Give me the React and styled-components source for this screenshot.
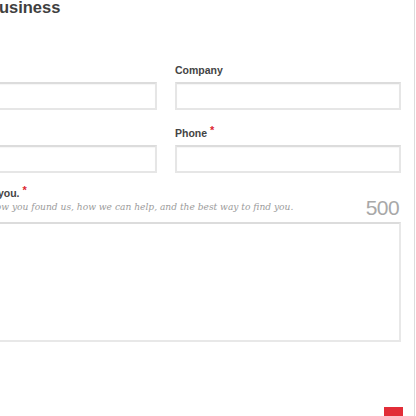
import React from "react";
import styled, { createGlobalStyle } from "styled-components";

const Global = createGlobalStyle`
  html, body { margin: 0; padding: 0; background: #fff; }
  body { font-family: "Liberation Sans", Arial, Helvetica, sans-serif; }
  * { box-sizing: border-box; }
`;

const Page = styled.div`
  width: 414px;
  height: 416px;
  border-right: 1px solid #dcdcdc;
  overflow: hidden;
  box-sizing: content-box;
`;

const Form = styled.form`
  width: 470px;
  margin-left: -69px;
  display: flex;
  flex-direction: column;
`;

const Heading = styled.h2`
  margin: 0 0 48px 56px;
  font-size: 16.5px;
  line-height: 15px;
  font-weight: 700;
  color: #3f3f3f;
`;

const Grid = styled.div`
  display: grid;
  grid-template-columns: 226px 226px;
  column-gap: 18px;
  row-gap: 16px;
`;

const Field = styled.div`
  display: flex;
  flex-direction: column;
`;

const Label = styled.label`
  font-size: 10.5px;
  line-height: ${(p) => (p.$tight ? "12px" : "14px")};
  margin-bottom: ${(p) => (p.$tight ? "0" : "5px")};
  font-weight: 700;
  color: #444;
`;

const Req = styled.span`
  color: #dd2630;
  font-size: 11px;
  margin-left: 3px;
  vertical-align: 3px;
  line-height: 0;
`;

const Input = styled.input`
  height: 28px;
  width: 100%;
  border: 2px solid #e6e6e6;
  border-top-color: #dcdcdc;
  background: #fff;
  box-shadow: inset 0 1px 1px rgba(0, 0, 0, 0.04);
  outline: none;
`;

const Message = styled.div`
  margin-top: 14px;
  display: flex;
  flex-direction: column;
`;

const MessageHeader = styled.div`
  display: flex;
  justify-content: space-between;
  align-items: flex-end;
`;

const MessageText = styled.div`
  display: flex;
  flex-direction: column;
  padding-bottom: 6px;
`;

const Hint = styled.span`
  margin-top: 4px;
  font-family: "DejaVu Serif", "Liberation Serif", serif;
  font-style: italic;
  font-size: 9.1px;
  line-height: 9px;
  color: #9b9b9b;
  white-space: nowrap;
`;

const Count = styled.span`
  font-size: 21px;
  line-height: 21px;
  letter-spacing: -0.6px;
  color: #a8a8a8;
  margin-right: 2px;
`;

const TextArea = styled.textarea`
  margin-top: 4px;
  height: 120px;
  width: 100%;
  resize: none;
  border: 2px solid #e8e8e8;
  border-top-color: #dcdcdc;
  background: #fff;
  outline: none;
`;

const ButtonRow = styled.div`
  margin-top: 65px;
  margin-right: -2px;
  display: flex;
  justify-content: flex-end;
`;

const Submit = styled.button`
  width: 19px;
  height: 30px;
  border: none;
  padding: 0;
  background: #e22d38;
`;

export default function App() {
  return (
    <>
      <Global />
      <Page>
        <Form onSubmit={(e) => e.preventDefault()}>
          <Heading>Business</Heading>
          <Grid>
            <Field>
              <Label>Name<Req>*</Req></Label>
              <Input type="text" />
            </Field>
            <Field>
              <Label>Company</Label>
              <Input type="text" />
            </Field>
            <Field>
              <Label>Email<Req>*</Req></Label>
              <Input type="email" />
            </Field>
            <Field>
              <Label>Phone<Req>*</Req></Label>
              <Input type="tel" />
            </Field>
          </Grid>
          <Message>
            <MessageHeader>
              <MessageText>
                <Label $tight>Tell us about you.<Req>*</Req></Label>
                <Hint>Let us know how you found us, how we can help, and the best way to find you.</Hint>
              </MessageText>
              <Count>500</Count>
            </MessageHeader>
            <TextArea />
          </Message>
          <ButtonRow>
            <Submit type="submit" aria-label="Send" />
          </ButtonRow>
        </Form>
      </Page>
    </>
  );
}
